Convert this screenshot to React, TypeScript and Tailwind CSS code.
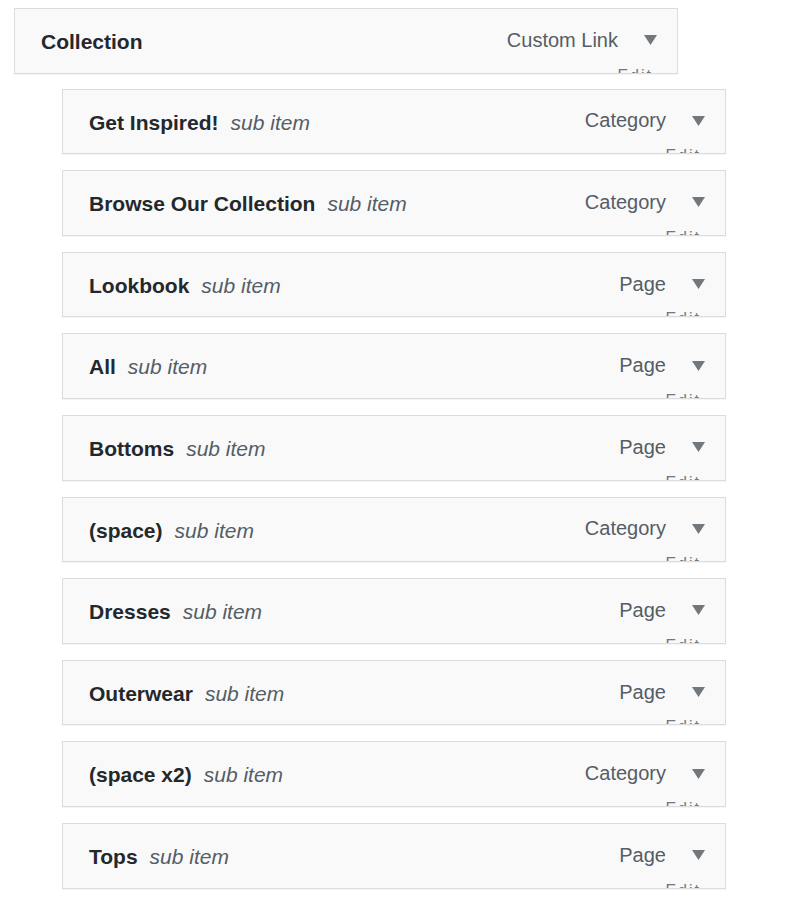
import React from 'react';

type Item = { title: string; kind: string; sub?: boolean };

const items: Item[] = [
    { title: 'Get Inspired!', kind: 'Category', sub: true },
    { title: 'Browse Our Collection', kind: 'Category', sub: true },
    { title: 'Lookbook', kind: 'Page', sub: true },
    { title: 'All', kind: 'Page', sub: true },
    { title: 'Bottoms', kind: 'Page', sub: true },
    { title: '(space)', kind: 'Category', sub: true },
    { title: 'Dresses', kind: 'Page', sub: true },
    { title: 'Outerwear', kind: 'Page', sub: true },
    { title: '(space x2)', kind: 'Category', sub: true },
    { title: 'Tops', kind: 'Page', sub: true },
];

function MenuRow({ item }: { item: Item }) {
    return (
        <div className="relative w-[664px] h-[65.6px] overflow-hidden bg-[#f9f9f9] border border-[#dcdcde] shadow-[0_1px_1px_rgba(0,0,0,0.04)] flex items-center pl-[26px] pr-[20px]">
            <div className="flex-1 flex items-baseline gap-[12px] pt-[2px]">
                <span className="text-[21px] font-bold text-[#23282d]">{item.title}</span>
                {item.sub && <span className="text-[21px] italic text-[#555d66]">sub item</span>}
            </div>
            <span className="text-[20px] text-[#555d66] mr-[26px] -mt-[2px]">{item.kind}</span>
            <svg width="13" height="10" viewBox="0 0 13 10" className="-mt-[1px]">
                <path d="M0 0 L13 0 L6.5 10 Z" fill="#72777c" />
            </svg>
            {/* edit link peeking out below the handle */}
            <span className="absolute right-[24px] bottom-[-15px] text-[16px] tracking-[2px] text-[#72777c]">Edit</span>
        </div>
    );
}

export default function App() {
    return (
        <main className="min-h-screen bg-white pt-[8px] pl-[14px] font-['Liberation_Sans',Arial,sans-serif]">
            <MenuRow item={{ title: 'Collection', kind: 'Custom Link' }} />
            <div className="pl-[48px] mt-[15px] flex flex-col gap-[16px]">
                {items.map((it) => (
                    <MenuRow key={it.title} item={it} />
                ))}
            </div>
        </main>
    );
}
